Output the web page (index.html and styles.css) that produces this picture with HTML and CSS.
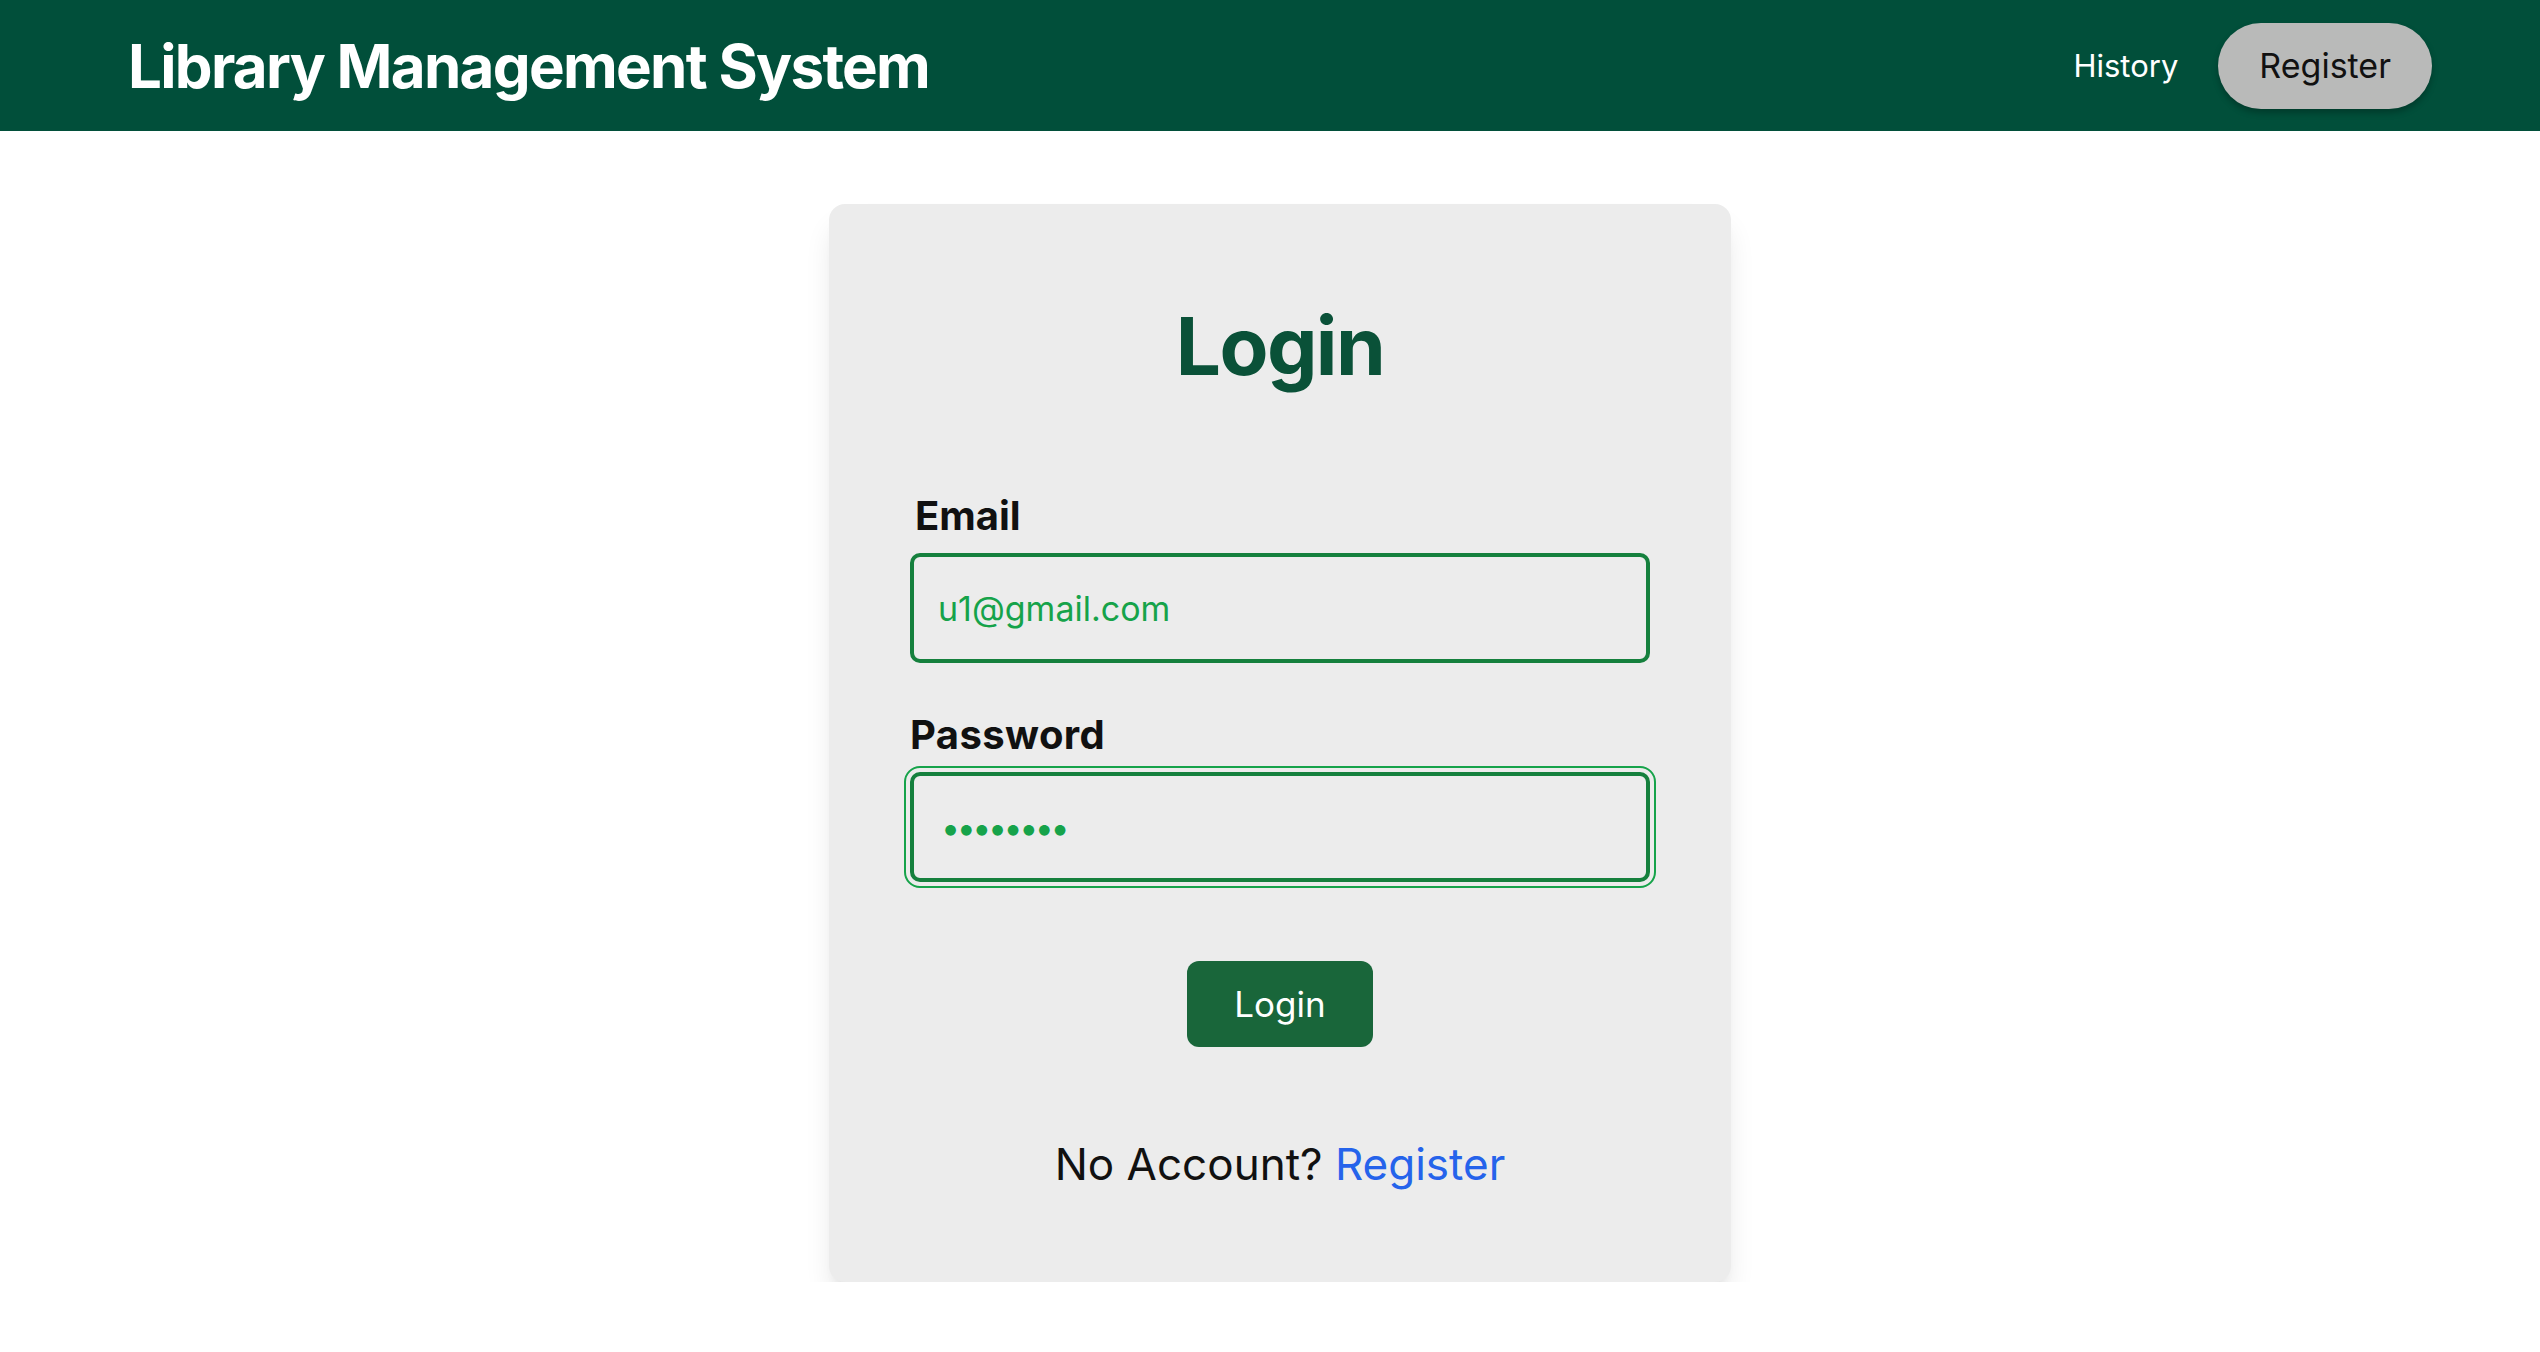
FILE: index.html
```html
<!DOCTYPE html>
<html lang="en">
<head>
<meta charset="utf-8">
<title>Library Management System</title>
<link rel="stylesheet" href="styles.css">
</head>
<body>
<header class="topbar">
  <h1 class="brand">Library Management System</h1>
  <nav class="nav">
    <a class="nav-link" href="#">History</a>
    <a class="nav-button" href="#">Register</a>
  </nav>
</header>
<main class="page">
  <section class="card">
    <h2 class="card-title">Login</h2>
    <form class="form">
      <label class="field-label field-label--email" for="email">Email</label>
      <input class="field" id="email" type="email" value="u1@gmail.com">
      <label class="field-label field-label--password" for="password">Password</label>
      <input class="field field--password field--focused" id="password" type="password" value="12345678">
      <button class="submit" type="button">Login</button>
    </form>
    <p class="switch">No Account? <a class="switch-link" href="#">Register</a></p>
  </section>
</main>
</body>
</html>
```
FILE: styles.css
```css
* { box-sizing: border-box; }

html, body {
  margin: 0;
  padding: 0;
  background: #ffffff;
  font-family: Inter, "Noto Sans", "Liberation Sans", sans-serif;
  color: #111111;
}

.topbar {
  height: 131px;
  background: #014f3a;
  display: flex;
  align-items: center;
  justify-content: space-between;
  padding: 0 108px 0 128px;
}

.brand {
  margin: 0;
  color: #ffffff;
  font-family: Inter, "Liberation Sans", sans-serif;
  font-weight: 700;
  font-size: 60px;
  line-height: 72px;
  letter-spacing: -1.7px;
}

.nav {
  display: flex;
  align-items: center;
  gap: 40px;
}

.nav-link {
  color: #ffffff;
  text-decoration: none;
  font-size: 31px;
  line-height: 40px;
}

.nav-button {
  display: block;
  background: #b9bab9;
  color: #111111;
  text-decoration: none;
  font-size: 34px;
  line-height: 54px;
  padding: 16px 41px;
  border-radius: 999px;
  box-shadow: 0 4px 6px rgba(0, 0, 0, 0.25);
}

.page {
  display: flex;
  justify-content: center;
  padding: 73px 0 0 20px;
}

.card {
  width: 902px;
  background: #ececec;
  border-radius: 16px;
  padding: 94px 81px 86px;
  box-shadow: 0 20px 30px -6px rgba(0, 0, 0, 0.12), 0 8px 12px -8px rgba(0, 0, 0, 0.1);
}

.card-title {
  margin: 0 0 94px;
  text-align: center;
  color: #0a5138;
  font-size: 80px;
  line-height: 96px;
  font-weight: 700;
  letter-spacing: -1.6px;
}

.form {
  display: flex;
  flex-direction: column;
  margin: 0;
}

.field-label {
  font-size: 40px;
  line-height: 56px;
  font-weight: 700;
  margin-bottom: 9px;
}

.field-label--email {
  padding-left: 5px;
}

.field-label--password {
  margin-top: 44px;
  letter-spacing: 0.4px;
}

.field {
  display: block;
  width: 100%;
  height: 110px;
  border: 4px solid #15803d;
  border-radius: 10px;
  background: transparent;
  padding: 0 24px;
  font-family: Inter, "Noto Sans", sans-serif;
  font-size: 34px;
  color: #16a34a;
  outline: none;
}

.field--password {
  letter-spacing: -3.5px;
  padding-left: 27px;
}

.field--focused {
  outline: 2px solid #16a34a;
  outline-offset: 4px;
}

.submit {
  align-self: center;
  margin-top: 79px;
  background: #19663a;
  color: #ffffff;
  border: none;
  border-radius: 12px;
  font-family: Inter, "Noto Sans", sans-serif;
  font-size: 35px;
  line-height: 54px;
  padding: 16px 47px;
}

.switch {
  margin: 85px 0 0;
  text-align: center;
  font-size: 44px;
  line-height: 64px;
  color: #111111;
}

.switch-link {
  color: #2563eb;
  text-decoration: none;
}
```
